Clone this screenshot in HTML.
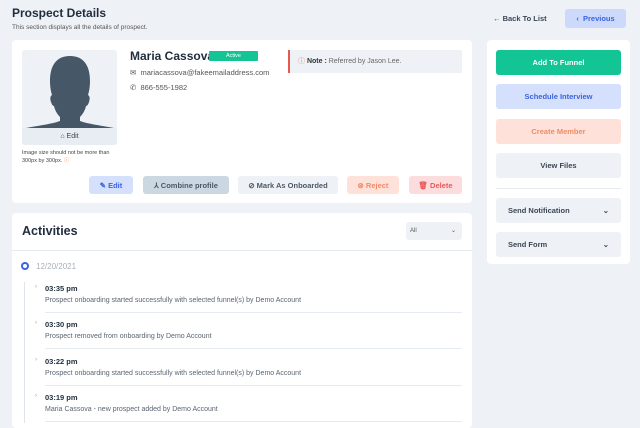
<!DOCTYPE html>
<html><head><style>
*{box-sizing:border-box;margin:0;padding:0}
body{width:640px;height:423px;overflow:hidden;background:#eef2f7;font-family:"Liberation Sans",sans-serif;color:#1f2d3d;position:relative}
.a{position:absolute}
.card{background:#fff;border-radius:4px}
.btn{position:absolute;border-radius:3px;font-size:7.5px;font-weight:bold;display:flex;align-items:center;justify-content:center;gap:5px}
.rb{left:496px;width:125px;height:25px}
.t{font-size:7.5px;font-weight:bold;color:#1f2d3d}
.d{font-size:7px;color:#5b6573}
.sep{position:absolute;left:45px;width:417px;height:1px;background:#e6ebf1}
</style></head><body>
<div class="a" style="left:12px;top:6px;font-size:12px;font-weight:bold">Prospect Details</div>
<div class="a" style="left:12px;top:24px;font-size:6.5px;color:#555">This section displays all the details of prospect.</div>
<div class="a" style="left:493px;top:14px;font-size:7.5px;font-weight:bold;color:#3c4654">← Back To List</div>
<div class="btn" style="left:565px;top:9px;width:61px;height:19px;background:#cdd9fb;color:#3b63e0">‹&nbsp; Previous</div>

<div class="a card" style="left:12px;top:40px;width:460px;height:163px"></div>
<div class="a" style="left:22px;top:50px;width:95px;height:95px;background:#eef2f7;border-radius:3px;overflow:hidden">
<svg width="95" height="78" viewBox="0 0 95 78"><path d="M48 6c-14 0-20 10-20 25 0 6 1 11 2 14-2 1-2 4-1 7 1 3 2 4 3 4 1 5 4 9 6 11v4c-8 3-24 5-34 7h88c-10-2-26-4-34-7v-4c2-2 5-6 6-11 1 0 2-1 3-4 1-3 1-6-1-7 1-3 2-8 2-14 0-15-6-25-20-25z" fill="#465768"/></svg>
<div style="position:absolute;left:0;top:78px;width:95px;height:17px;background:#e8edf3;font-size:7px;color:#444;text-align:center;line-height:17px">⌂ Edit</div>
</div>
<div class="a" style="left:22px;top:149px;font-size:5.5px;color:#444;line-height:8px">Image size should not be more than<br>300px by 300px. <span style="color:#f07a55">ⓘ</span></div>
<div class="a" style="left:130px;top:49px;font-size:12px;font-weight:bold;color:#1f2d3d">Maria Cassova</div>
<div class="a" style="left:209px;top:51px;width:49px;height:10px;background:#14c494;color:#fff;font-size:5.5px;text-align:center;line-height:10px;border-radius:1px">Active</div>
<div class="a" style="left:130px;top:68px;font-size:7.5px;color:#555">✉&nbsp; mariacassova@fakeemailaddress.com</div>
<div class="a" style="left:130px;top:83px;font-size:7.5px;color:#555">✆&nbsp; 866-555-1982</div>
<div class="a" style="left:288px;top:50px;width:174px;height:23px;background:#eef2f7;border-left:2px solid #e85a50;font-size:7px;line-height:23px;padding-left:8px;color:#666"><span style="color:#f07a55">ⓘ</span> <b style="color:#333">Note :</b> Referred by Jason Lee.</div>
<div class="btn" style="left:89px;top:176px;width:44px;height:18px;background:#d5e0fd;color:#3b63e0">✎ Edit</div>
<div class="btn" style="left:143px;top:176px;width:86px;height:18px;background:#cbd8e2;color:#4c5866">⅄ Combine profile</div>
<div class="btn" style="left:238px;top:176px;width:100px;height:18px;background:#eef2f7;color:#4c5866">⊘ Mark As Onboarded</div>
<div class="btn" style="left:347px;top:176px;width:52px;height:18px;background:#fee2d9;color:#f28a68">⊗ Reject</div>
<div class="btn" style="left:409px;top:176px;width:53px;height:18px;background:#fcdcdc;color:#ea5a5a">🗑 Delete</div>

<div class="a card" style="left:12px;top:213px;width:460px;height:215px"></div>
<div class="a" style="left:22px;top:224px;font-size:12.5px;font-weight:bold">Activities</div>
<div class="a" style="left:406px;top:222px;width:56px;height:18px;background:#eef2f7;border-radius:3px;font-size:6px;color:#555;line-height:18px;padding-left:4px">All<span style="position:absolute;right:6px">⌄</span></div>
<div class="a" style="left:12px;top:250px;width:460px;height:1px;background:#e6ebf1"></div>
<div class="a" style="left:21px;top:262px;width:8px;height:8px;border:2px solid #3b63e0;border-radius:50%"></div>
<div class="a" style="left:36px;top:262px;font-size:8px;color:#aab0b8">12/20/2021</div>
<div class="a" style="left:24px;top:282px;width:1px;height:141px;background:#dfe4ea"></div>
<div class="a" style="left:35px;top:284px;font-size:6px;color:#999">›</div><div class="a t" style="left:45px;top:284px">03:35 pm</div><div class="a d" style="left:45px;top:297px">Prospect onboarding started successfully with selected funnel(s) by Demo Account</div>
<div class="sep" style="top:312px"></div>
<div class="a" style="left:35px;top:320px;font-size:6px;color:#999">›</div><div class="a t" style="left:45px;top:320px">03:30 pm</div><div class="a d" style="left:45px;top:333px">Prospect removed from onboarding by Demo Account</div>
<div class="sep" style="top:348px"></div>
<div class="a" style="left:35px;top:357px;font-size:6px;color:#999">›</div><div class="a t" style="left:45px;top:357px">03:22 pm</div><div class="a d" style="left:45px;top:370px">Prospect onboarding started successfully with selected funnel(s) by Demo Account</div>
<div class="sep" style="top:385px"></div>
<div class="a" style="left:35px;top:393px;font-size:6px;color:#999">›</div><div class="a t" style="left:45px;top:393px">03:19 pm</div><div class="a d" style="left:45px;top:406px">Maria Cassova - new prospect added by Demo Account</div>
<div class="sep" style="top:421px"></div>

<div class="a card" style="left:487px;top:40px;width:143px;height:224px"></div>
<div class="btn rb" style="top:50px;background:#13c494;color:#fff">Add To Funnel</div>
<div class="btn rb" style="top:84px;background:#d5e0fd;color:#3b63e0">Schedule Interview</div>
<div class="btn rb" style="top:119px;background:#fee2d9;color:#f28a68">Create Member</div>
<div class="btn rb" style="top:153px;background:#eef2f7;color:#3c4654">View Files</div>
<div class="a" style="left:496px;top:188px;width:125px;height:1px;background:#e6ebf1"></div>
<div class="btn rb" style="top:198px;background:#eef2f7;color:#3c4654;justify-content:space-between;padding:0 12px">Send Notification<span>⌄</span></div>
<div class="btn rb" style="top:232px;background:#eef2f7;color:#3c4654;justify-content:space-between;padding:0 12px">Send Form<span>⌄</span></div>
</body></html>
